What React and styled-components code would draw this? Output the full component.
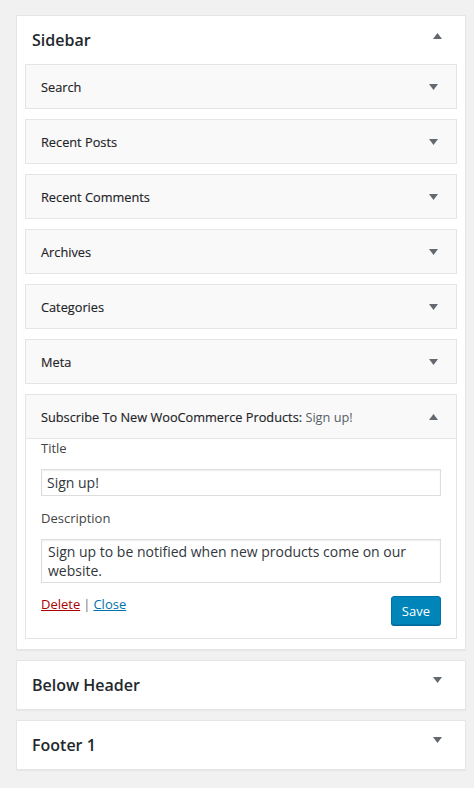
import { createGlobalStyle, styled } from "styled-components";

const GlobalStyle = createGlobalStyle`
    body {
        margin: 0;
        background: #f1f1f1;
        font-family: "Open Sans", "Noto Sans", sans-serif;
        color: #23282d;
    }
`;

const widgets = ["Search", "Recent Posts", "Recent Comments", "Archives", "Categories", "Meta"];

const Arrow = ({ up }) => (
    <svg width="9" height="6" viewBox="0 0 9 6">
        <polygon points={up ? "0,6 9,6 4.5,0" : "0,0 9,0 4.5,6"} fill="#646970" />
    </svg>
);

const App = () => {
    return (
        <Page>
            <GlobalStyle />
            <SidebarBox>
                <SidebarHeader>
                    <h2>Sidebar</h2>
                    <Toggle $top={-4}><Arrow up /></Toggle>
                </SidebarHeader>
                <WidgetList>
                    {widgets.map((name) => (
                        <Widget key={name}>
                            <WidgetTop>
                                <h3>{name}</h3>
                                <Arrow />
                            </WidgetTop>
                        </Widget>
                    ))}

                    <Widget>
                        <WidgetTop $open>
                            <h3>Subscribe To New WooCommerce Products: <span>Sign up!</span></h3>
                            <Arrow up />
                        </WidgetTop>
                        <WidgetBody>
                            <Label>Title</Label>
                            <Input defaultValue="Sign up!" />
                            <Label>Description</Label>
                            <TextArea defaultValue="Sign up to be notified when new products come on our website." />
                            <Actions>
                                <Links>
                                    <DeleteLink href="#">Delete</DeleteLink>
                                    <Sep>|</Sep>
                                    <CloseLink href="#">Close</CloseLink>
                                </Links>
                                <SaveButton>Save</SaveButton>
                            </Actions>
                        </WidgetBody>
                    </Widget>
                </WidgetList>
            </SidebarBox>

            <ClosedSidebar>
                <h2>Below Header</h2>
                <Toggle $top={-5}><Arrow /></Toggle>
            </ClosedSidebar>
            <ClosedSidebar>
                <h2>Footer 1</h2>
                <Toggle $top={-5}><Arrow /></Toggle>
            </ClosedSidebar>
        </Page>
    );
};

const Page = styled.div`
    display: flex;
    flex-direction: column;
    gap: 10px;
    padding: 15px 8px 18px 16px;
`;

const SidebarBox = styled.div`
    background: #fff;
    border: 1px solid #e5e5e5;
    box-shadow: 0 1px 1px rgba(0, 0, 0, 0.04);
`;

const SidebarHeader = styled.div`
    height: 48px;
    display: flex;
    align-items: center;
    justify-content: space-between;
    padding: 0 23px 0 15px;

    & h2 {
        margin: 0;
        font-size: 16px;
        font-weight: 600;
        color: #23282d;
    }
`;

const Toggle = styled.span`
    display: flex;
    position: relative;
    top: ${(p) => p.$top}px;
`;

const WidgetList = styled.div`
    display: flex;
    flex-direction: column;
    gap: 10px;
    padding: 0 8px 10px;
`;

const Widget = styled.div`
    background: #fff;
    border: 1px solid #e5e5e5;
`;

const WidgetTop = styled.div`
    height: 43px;
    background: #f9f9f9;
    display: flex;
    align-items: center;
    justify-content: space-between;
    padding: 0 18px 0 15px;
    border-bottom: ${(p) => (p.$open ? "1px solid #e5e5e5" : "none")};

    & h3 {
        margin: 0;
        font-size: 12.75px;
        font-weight: 400;
        color: #1d2327;
        -webkit-text-stroke: 0.15px #1d2327;
    }

    & h3 span {
        color: #555d66;
        -webkit-text-stroke: 0;
    }
`;

const WidgetBody = styled.div`
    display: flex;
    flex-direction: column;
    padding: 0 15px 13px;
`;

const Label = styled.label`
    font-size: 13px;
    line-height: 18px;
    color: #444;
    margin-bottom: 12px;

    & + * {
        margin-bottom: 13px;
    }
`;

const Input = styled.input`
    box-sizing: border-box;
    height: 27px;
    width: 100%;
    border: 1px solid #ddd;
    box-shadow: inset 0 1px 2px rgba(0, 0, 0, 0.07);
    padding: 0 5px;
    font-family: "Open Sans", "Noto Sans", sans-serif;
    font-size: 14px;
    color: #32373c;
    outline: none;
`;

const TextArea = styled.textarea`
    box-sizing: border-box;
    height: 44px;
    width: 100%;
    border: 1px solid #ddd;
    box-shadow: inset 0 1px 2px rgba(0, 0, 0, 0.07);
    padding: 2px 6px;
    font-family: "Open Sans", "Noto Sans", sans-serif;
    font-size: 14px;
    line-height: 19px;
    color: #32373c;
    resize: none;
    overflow: hidden;
    outline: none;
`;

const Actions = styled.div`
    display: flex;
    justify-content: space-between;
    align-items: flex-start;
`;

const Links = styled.div`
    font-size: 13px;
    line-height: 18px;
    margin-top: -1px;
`;

const DeleteLink = styled.a`
    color: #a00;
`;

const CloseLink = styled.a`
    color: #0073aa;
`;

const Sep = styled.span`
    color: #72777c;
    margin: 0 3px;
`;

const SaveButton = styled.button`
    height: 29px;
    padding: 0 10px;
    background: #0085ba;
    border: 1px solid #0073aa;
    border-radius: 3px;
    box-shadow: 0 1px 0 #006799;
    color: #fff;
    font-family: "Open Sans", "Noto Sans", sans-serif;
    font-size: 13px;
    cursor: pointer;
`;

const ClosedSidebar = styled.div`
    height: 48px;
    background: #fff;
    border: 1px solid #e5e5e5;
    box-shadow: 0 1px 1px rgba(0, 0, 0, 0.04);
    display: flex;
    align-items: center;
    justify-content: space-between;
    padding: 0 23px 0 15px;

    & h2 {
        margin: 0;
        font-size: 16px;
        font-weight: 600;
        color: #23282d;
    }
`;

export default App;
